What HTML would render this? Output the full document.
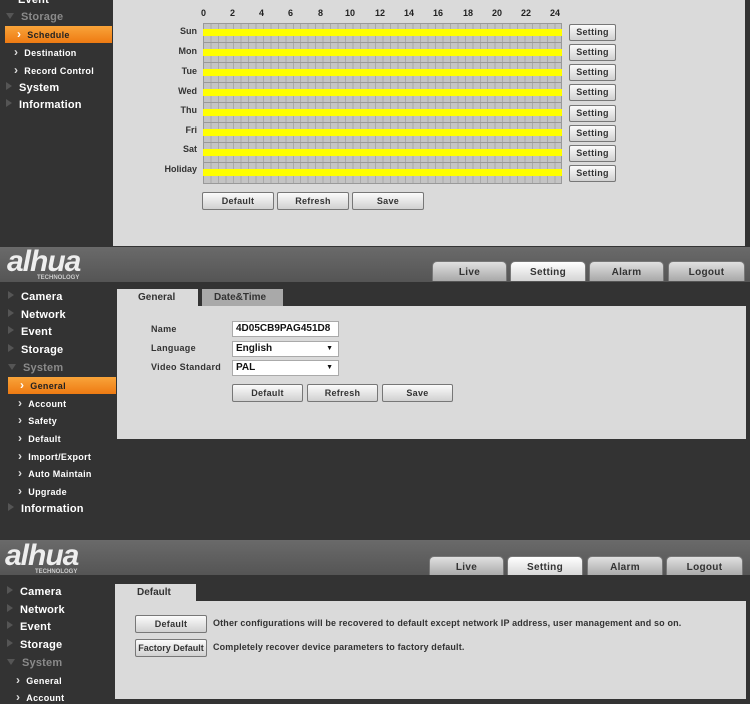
<!DOCTYPE html>
<html><head><meta charset="utf-8"><style>
*{margin:0;padding:0;box-sizing:border-box}
body{width:750px;height:700px;overflow:hidden;background:#333;font-family:"Liberation Sans",sans-serif;font-weight:bold;position:relative}
.a{position:absolute}
.side{background:#333}
.light{background:#dadada}
.si{position:absolute;color:#fff;font-size:11px;white-space:nowrap;letter-spacing:0.2px}
.si.g{color:#8a8a8a}
.si .t{display:inline-block;width:0;height:0;border-left:6px solid #555;border-top:4px solid transparent;border-bottom:4px solid transparent;margin-right:7px;vertical-align:1px}
.si.g .t{border-left:4px solid transparent;border-right:4px solid transparent;border-top:6px solid #555;border-bottom:0}
.sub{position:absolute;color:#fff;font-size:9px;white-space:nowrap;letter-spacing:0.3px}
.sub:before{content:"›";font-size:12px;margin-right:6px;color:#ddd}
.hl{position:absolute;background:linear-gradient(#f9a43a,#ee7a12);color:#222;font-size:9px;padding-left:12px;line-height:16px;letter-spacing:0.3px}
.hl:before{content:"›";color:#fff;font-size:12px;margin-right:6px}
.btn{position:absolute;border:1px solid #777;border-radius:2px;background:linear-gradient(#fbfbfb,#d0d0d0);font-size:9px;color:#333;text-align:center;letter-spacing:0.3px}
.lbl{position:absolute;font-size:9px;color:#333;white-space:nowrap;letter-spacing:0.3px}
.hdr{position:absolute;left:0;width:750px;background:linear-gradient(#6a6a6a,#555);}
.logo{position:absolute;color:#eee;font-style:italic;font-size:30px;font-weight:bold;letter-spacing:-1px;font-family:"Liberation Sans",sans-serif}
.logo small{position:absolute;left:30px;top:30px;font-size:6px;font-style:normal;letter-spacing:0;color:#ccc}
.tab{position:absolute;height:20px;border-radius:5px 5px 0 0;background:linear-gradient(#e0e0e0,#a8a8a8);font-size:10px;color:#333;text-align:center;line-height:21px;border:1px solid #777;border-bottom:0;letter-spacing:0.3px}
.tab.on{background:linear-gradient(#fff,#d4d4d4)}
.grid{position:absolute;left:203px;top:23px;width:359px;height:161px;border:1px solid #999;
background:
repeating-linear-gradient(to right,transparent 0,transparent 6.48px,#aaa 6.48px,#aaa 7.48px),
#c4c4c4}
.bar{position:absolute;left:203px;width:359px;height:7px;background:#ffff00}
.day{position:absolute;right:553px;font-size:9px;color:#333}
.hr{position:absolute;top:8px;font-size:9px;color:#222}
.inp{position:absolute;background:#fff;border:1px solid #aaa;font-size:10px;color:#111;padding-left:3px;line-height:14px}
.inp .dd{position:absolute;right:5px;top:0;font-size:7px}
</style></head><body>

<!-- PANEL 1 -->
<div class="a side" style="left:0;top:0;width:113px;height:246px"></div>
<div class="a light" style="left:113px;top:0;width:632px;height:246px"></div>
<div class="si" style="left:18px;top:-6px">Event</div>
<div class="si g" style="left:6px;top:11px"><span class="t"></span>Storage</div>
<div class="hl" style="left:5px;top:26px;width:107px">Schedule</div>
<div class="sub" style="left:14px;top:45px">Destination</div>
<div class="sub" style="left:14px;top:63px">Record Control</div>
<div class="si" style="left:6px;top:82px"><span class="t"></span>System</div>
<div class="si" style="left:6px;top:99px"><span class="t"></span>Information</div>

<div class="hr" style="left:201px">0</div><div class="hr" style="left:230px">2</div><div class="hr" style="left:259px">4</div><div class="hr" style="left:288px">6</div><div class="hr" style="left:318px">8</div><div class="hr" style="left:345px">10</div><div class="hr" style="left:375px">12</div><div class="hr" style="left:404px">14</div><div class="hr" style="left:433px">16</div><div class="hr" style="left:463px">18</div><div class="hr" style="left:492px">20</div><div class="hr" style="left:521px">22</div><div class="hr" style="left:550px">24</div>
<div class="grid"></div>
<div class="a" style="left:203px;top:29px;width:359px;height:150px;background:repeating-linear-gradient(to bottom,transparent 0,transparent 13px,#999 13px,#999 14px,transparent 14px,transparent 20px)"></div>
<div class="bar" style="top:29px"></div><div class="bar" style="top:49px"></div><div class="bar" style="top:69px"></div><div class="bar" style="top:89px"></div><div class="bar" style="top:109px"></div><div class="bar" style="top:129px"></div><div class="bar" style="top:149px"></div><div class="bar" style="top:169px"></div>
<div class="day" style="top:26px">Sun</div><div class="day" style="top:46px">Mon</div><div class="day" style="top:66px">Tue</div><div class="day" style="top:86px">Wed</div><div class="day" style="top:105px">Thu</div><div class="day" style="top:125px">Fri</div><div class="day" style="top:144px">Sat</div><div class="day" style="top:164px">Holiday</div>
<div class="btn" style="left:569px;top:24px;width:47px;height:17px;line-height:15px">Setting</div>
<div class="btn" style="left:569px;top:44px;width:47px;height:17px;line-height:15px">Setting</div>
<div class="btn" style="left:569px;top:64px;width:47px;height:17px;line-height:15px">Setting</div>
<div class="btn" style="left:569px;top:84px;width:47px;height:17px;line-height:15px">Setting</div>
<div class="btn" style="left:569px;top:105px;width:47px;height:17px;line-height:15px">Setting</div>
<div class="btn" style="left:569px;top:125px;width:47px;height:17px;line-height:15px">Setting</div>
<div class="btn" style="left:569px;top:145px;width:47px;height:17px;line-height:15px">Setting</div>
<div class="btn" style="left:569px;top:165px;width:47px;height:17px;line-height:15px">Setting</div>
<div class="btn" style="left:202px;top:192px;width:72px;height:18px;line-height:16px">Default</div>
<div class="btn" style="left:277px;top:192px;width:72px;height:18px;line-height:16px">Refresh</div>
<div class="btn" style="left:352px;top:192px;width:72px;height:18px;line-height:16px">Save</div>

<!-- PANEL 2 -->
<div class="hdr" style="top:247px;height:35px"></div>
<div class="logo" style="left:7px;top:245px">alhua<small>TECHNOLOGY</small></div>
<div class="tab" style="left:432px;top:261px;width:75px">Live</div>
<div class="tab on" style="left:510px;top:261px;width:76px">Setting</div>
<div class="tab" style="left:589px;top:261px;width:75px">Alarm</div>
<div class="tab" style="left:668px;top:261px;width:77px">Logout</div>
<div class="a" style="left:0;top:282px;width:750px;height:256px;background:#333"></div>
<div class="si" style="left:8px;top:291px"><span class="t"></span>Camera</div>
<div class="si" style="left:8px;top:309px"><span class="t"></span>Network</div>
<div class="si" style="left:8px;top:326px"><span class="t"></span>Event</div>
<div class="si" style="left:8px;top:344px"><span class="t"></span>Storage</div>
<div class="si g" style="left:8px;top:362px"><span class="t"></span>System</div>
<div class="hl" style="left:8px;top:377px;width:108px">General</div>
<div class="sub" style="left:18px;top:396px">Account</div>
<div class="sub" style="left:18px;top:413px">Safety</div>
<div class="sub" style="left:18px;top:431px">Default</div>
<div class="sub" style="left:18px;top:449px">Import/Export</div>
<div class="sub" style="left:18px;top:466px">Auto Maintain</div>
<div class="sub" style="left:18px;top:484px">Upgrade</div>
<div class="si" style="left:8px;top:503px"><span class="t"></span>Information</div>
<div class="a light" style="left:117px;top:289px;width:81px;height:18px;font-size:10px;color:#333;padding:3px 0 0 21px">General</div>
<div class="a" style="left:202px;top:289px;width:81px;height:17px;background:#a9a9a9;font-size:10px;color:#333;padding:3px 0 0 12px">Date&amp;Time</div>
<div class="a light" style="left:117px;top:306px;width:629px;height:133px"></div>
<div class="lbl" style="left:151px;top:324px">Name</div>
<div class="lbl" style="left:151px;top:343px">Language</div>
<div class="lbl" style="left:151px;top:362px">Video Standard</div>
<div class="inp" style="left:232px;top:321px;width:107px;height:16px">4D05CB9PAG451D8</div>
<div class="inp" style="left:232px;top:341px;width:107px;height:16px">English<span class="dd">▼</span></div>
<div class="inp" style="left:232px;top:360px;width:107px;height:16px">PAL<span class="dd">▼</span></div>
<div class="btn" style="left:232px;top:384px;width:71px;height:18px;line-height:16px">Default</div>
<div class="btn" style="left:307px;top:384px;width:71px;height:18px;line-height:16px">Refresh</div>
<div class="btn" style="left:382px;top:384px;width:71px;height:18px;line-height:16px">Save</div>

<!-- PANEL 3 -->
<div class="hdr" style="top:540px;height:35px"></div>
<div class="logo" style="left:5px;top:539px">alhua<small>TECHNOLOGY</small></div>
<div class="tab" style="left:429px;top:556px;width:75px">Live</div>
<div class="tab on" style="left:507px;top:556px;width:76px">Setting</div>
<div class="tab" style="left:587px;top:556px;width:76px">Alarm</div>
<div class="tab" style="left:666px;top:556px;width:77px">Logout</div>
<div class="a" style="left:0;top:575px;width:750px;height:125px;background:#333"></div>
<div class="si" style="left:7px;top:586px"><span class="t"></span>Camera</div>
<div class="si" style="left:7px;top:604px"><span class="t"></span>Network</div>
<div class="si" style="left:7px;top:621px"><span class="t"></span>Event</div>
<div class="si" style="left:7px;top:639px"><span class="t"></span>Storage</div>
<div class="si g" style="left:7px;top:657px"><span class="t"></span>System</div>
<div class="sub" style="left:16px;top:673px">General</div>
<div class="sub" style="left:16px;top:690px">Account</div>
<div class="a light" style="left:115px;top:584px;width:81px;height:18px;font-size:10px;color:#333;padding:3px 0 0 22px">Default</div>
<div class="a light" style="left:115px;top:601px;width:631px;height:98px"></div>
<div class="btn" style="left:135px;top:615px;width:72px;height:18px;line-height:16px">Default</div>
<div class="btn" style="left:135px;top:639px;width:72px;height:18px;line-height:16px;letter-spacing:0">Factory Default</div>
<div class="lbl" style="left:213px;top:618px;letter-spacing:0.15px">Other configurations will be recovered to default except network IP address, user management and so on.</div>
<div class="lbl" style="left:213px;top:642px;letter-spacing:0.15px">Completely recover device parameters to factory default.</div>
</body></html>
